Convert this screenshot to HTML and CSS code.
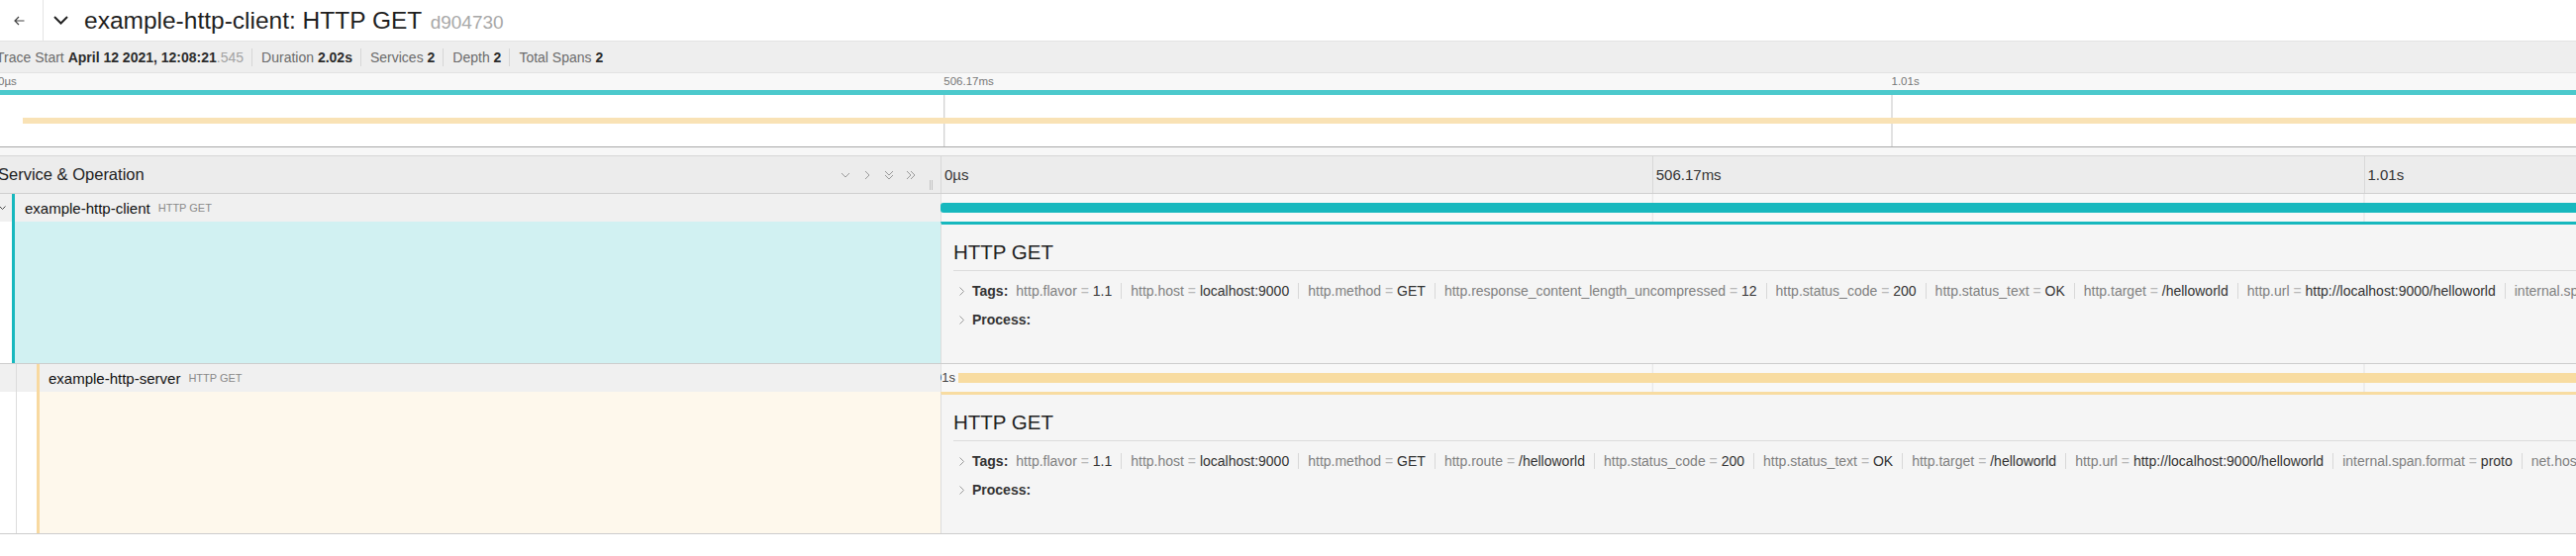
FILE: index.html
```html
<!DOCTYPE html>
<html lang="en">
<head>
    <meta charset="UTF-8">
    <meta name="viewport" content="width=device-width, initial-scale=1.0">
    <title>example-http-client: HTTP GET</title>
    <link rel="stylesheet" href="styles.css">
</head>
<body>
    <div class="page">
        <header class="title-bar">
            <a href="#" class="back-link">
                <svg width="11" height="10" viewBox="0 0 11 10"><path d="M10.5 5H1M5 1L1 5l4 4" fill="none" stroke="#444" stroke-width="1.2"/></svg>
            </a>
            <span class="title-toggle">
                <svg width="15" height="9" viewBox="0 0 15 9"><path d="M1 1l6.5 6.5L14 1" fill="none" stroke="#222" stroke-width="2"/></svg>
            </span>
            <h1 class="trace-title">example-http-client: HTTP GET <small class="trace-id">d904730</small></h1>
        </header>

        <ul class="trace-meta">
            <li>Trace Start <strong>April 12 2021, 12:08:21</strong><span class="ms">.545</span></li>
            <li>Duration <strong>2.02s</strong></li>
            <li>Services <strong>2</strong></li>
            <li>Depth <strong>2</strong></li>
            <li>Total Spans <strong>2</strong></li>
        </ul>

        <!-- Minimap -->
        <div class="minimap-ticks">
            <span>0µs</span>
            <span>506.17ms</span>
            <span>1.01s</span>
            <span></span>
        </div>
        <div class="minimap-canvas">
            <div class="mini-span mini-client"></div>
            <div class="mini-span mini-server"></div>
        </div>
        <div class="spacer"></div>

        <!-- Trace timeline -->
        <div class="view-header">
            <div class="view-header-left">
                <span>Service &amp; Operation</span>
                <div class="collapsers">
                    <svg width="12" height="12" viewBox="0 0 12 12"><path d="M2 4l4 4 4-4"/></svg>
                    <svg width="12" height="12" viewBox="0 0 12 12"><path d="M4 2l4 4-4 4"/></svg>
                    <svg width="12" height="12" viewBox="0 0 12 12"><path d="M2 2l4 4 4-4M2 6l4 4 4-4"/></svg>
                    <svg width="12" height="12" viewBox="0 0 12 12"><path d="M2 2l4 4-4 4M6 2l4 4-4 4"/></svg>
                </div>
                <span class="resizer"></span>
            </div>
            <div class="view-header-ticks">
                <span>0µs</span>
                <span>506.17ms</span>
                <span>1.01s</span>
                <span></span>
            </div>
        </div>

        <div class="span-row">
            <div class="span-name">
                <span class="span-toggle">
                    <svg width="7" height="5" viewBox="0 0 7 5"><path d="M0.5 0.5l3 3 3-3" fill="none" stroke="#444"/></svg>
                </span>
                <span class="color-bar client"></span>
                <span class="service">example-http-client</span>
                <span class="operation">HTTP GET</span>
            </div>
            <div class="span-timeline">
                <div class="span-bar client"></div>
            </div>
        </div>

        <div class="span-detail detail-client">
            <div class="detail-left">
                <span class="indent"></span>
                <span class="color-bar client"></span>
                <span class="detail-fill"></span>
            </div>
            <div class="detail-panel">
                <h2 class="detail-title">HTTP GET</h2>
                <div class="kv-row">
                    <svg class="kv-chevron" width="5" height="9" viewBox="0 0 5 9"><path d="M0.5 0.5l4 4-4 4" fill="none" stroke="#999"/></svg>
                    <strong>Tags:</strong>
                    <ul class="kv-list">
                        <li><span class="k">http.flavor</span> <span class="eq">=</span> <span class="v">1.1</span></li>
                        <li><span class="k">http.host</span> <span class="eq">=</span> <span class="v">localhost:9000</span></li>
                        <li><span class="k">http.method</span> <span class="eq">=</span> <span class="v">GET</span></li>
                        <li><span class="k">http.response_content_length_uncompressed</span> <span class="eq">=</span> <span class="v">12</span></li>
                        <li><span class="k">http.status_code</span> <span class="eq">=</span> <span class="v">200</span></li>
                        <li><span class="k">http.status_text</span> <span class="eq">=</span> <span class="v">OK</span></li>
                        <li><span class="k">http.target</span> <span class="eq">=</span> <span class="v">/helloworld</span></li>
                        <li><span class="k">http.url</span> <span class="eq">=</span> <span class="v">http://localhost:9000/helloworld</span></li>
                        <li><span class="k">internal.span.format</span> <span class="eq">=</span> <span class="v">proto</span></li>
                    </ul>
                </div>
                <div class="kv-row">
                    <svg class="kv-chevron" width="5" height="9" viewBox="0 0 5 9"><path d="M0.5 0.5l4 4-4 4" fill="none" stroke="#999"/></svg>
                    <strong>Process:</strong>
                </div>
            </div>
        </div>

        <div class="span-row">
            <div class="span-name">
                <span class="indent-guide"></span>
                <span class="color-bar server child"></span>
                <span class="service">example-http-server</span>
                <span class="operation">HTTP GET</span>
            </div>
            <div class="span-timeline">
                <div class="span-bar server offset">
                    <span class="span-label">2.01s</span>
                </div>
            </div>
        </div>

        <div class="span-detail detail-server">
            <div class="detail-left">
                <span class="indent-guide"></span>
                <span class="gap"></span>
                <span class="color-bar server"></span>
                <span class="detail-fill"></span>
            </div>
            <div class="detail-panel">
                <h2 class="detail-title">HTTP GET</h2>
                <div class="kv-row">
                    <svg class="kv-chevron" width="5" height="9" viewBox="0 0 5 9"><path d="M0.5 0.5l4 4-4 4" fill="none" stroke="#999"/></svg>
                    <strong>Tags:</strong>
                    <ul class="kv-list">
                        <li><span class="k">http.flavor</span> <span class="eq">=</span> <span class="v">1.1</span></li>
                        <li><span class="k">http.host</span> <span class="eq">=</span> <span class="v">localhost:9000</span></li>
                        <li><span class="k">http.method</span> <span class="eq">=</span> <span class="v">GET</span></li>
                        <li><span class="k">http.route</span> <span class="eq">=</span> <span class="v">/helloworld</span></li>
                        <li><span class="k">http.status_code</span> <span class="eq">=</span> <span class="v">200</span></li>
                        <li><span class="k">http.status_text</span> <span class="eq">=</span> <span class="v">OK</span></li>
                        <li><span class="k">http.target</span> <span class="eq">=</span> <span class="v">/helloworld</span></li>
                        <li><span class="k">http.url</span> <span class="eq">=</span> <span class="v">http://localhost:9000/helloworld</span></li>
                        <li><span class="k">internal.span.format</span> <span class="eq">=</span> <span class="v">proto</span></li>
                        <li><span class="k">net.host.name</span> <span class="eq">=</span> <span class="v">localhost</span></li>
                    </ul>
                </div>
                <div class="kv-row">
                    <svg class="kv-chevron" width="5" height="9" viewBox="0 0 5 9"><path d="M0.5 0.5l4 4-4 4" fill="none" stroke="#999"/></svg>
                    <strong>Process:</strong>
                </div>
            </div>
        </div>
    </div>
</body>
</html>
```

FILE: styles.css
```css
* {
    margin: 0;
    padding: 0;
    box-sizing: border-box;
    font-family: 'Liberation Sans', Arial, Helvetica, sans-serif;
}

body {
    background: #fff;
    width: 2602px;
    height: 562px;
    overflow: hidden;
}

/* page is wider than the window, scrolled a few px */
.page {
    width: 3829px;
    margin-left: -4px;
}

/* Title bar */
.title-bar {
    display: flex;
    align-items: center;
    height: 42px;
    border-bottom: 1px solid #e4e4e4;
    background: #fff;
}

.back-link {
    display: flex;
    align-items: center;
    justify-content: center;
    width: 48px;
    height: 100%;
    border-right: 1px solid #e4e4e4;
}

.title-toggle {
    display: flex;
    margin-left: 10px;
}

.trace-title {
    margin-left: 16px;
    font-size: 24.5px;
    font-weight: normal;
    color: #1f1f1f;
    white-space: nowrap;
}

.trace-id {
    margin-left: 2px;
    font-size: 19px;
    color: #a8a8a8;
}

/* Trace summary */
.trace-meta {
    display: flex;
    align-items: center;
    height: 31px;
    background: #eee;
    list-style: none;
    font-size: 14px;
    color: #6b6b6b;
}

.trace-meta li {
    padding: 0 8px 0 9px;
    border-left: 1px solid #d6d6d6;
    line-height: 18px;
    white-space: nowrap;
}

.trace-meta li:first-child {
    padding-left: 0;
    border-left: none;
}

.trace-meta strong {
    color: #2b2b2b;
}

.trace-meta .ms {
    color: #a3a3a3;
}

/* Minimap */
.minimap-ticks {
    display: grid;
    grid-template-columns: repeat(4, 1fr);
    height: 18px;
    background: #f8f8f8;
    border-top: 1px solid #e2e2e2;
    font-size: 11.5px;
    line-height: 17px;
    color: #777;
}

.minimap-ticks span:first-child {
    padding-left: 2px;
}

.minimap-canvas {
    height: 58px;
    border-bottom: 1px solid #a9a9a9;
    background: linear-gradient(90deg, #c4c4c4 1px, transparent 1px) 0 0 / 25% 100%, #fff;
}

.mini-span {
    height: 5px;
}

.mini-client {
    background: #4cc9cc;
}

.mini-server {
    height: 6px;
    margin: 23px 0 0 27px;
    background: #f9e2b5;
}

.spacer {
    height: 8px;
    background: #f7f7f7;
}

/* Timeline header */
.view-header {
    display: grid;
    grid-template-columns: 954px 1fr;
    height: 39px;
    background: #ececec;
    border-top: 1px solid #d6d6d6;
    border-bottom: 1px solid #cfcfcf;
}

.view-header-left {
    display: flex;
    align-items: center;
    padding: 0 8px 0 2px;
    font-size: 16.5px;
    color: #222;
}

.collapsers {
    display: flex;
    gap: 10px;
    margin-left: auto;
}

.collapsers path {
    fill: none;
    stroke: #999;
    stroke-width: 1;
}

.resizer {
    align-self: flex-end;
    width: 3px;
    height: 10px;
    margin: 0 0 3px 13px;
    border-left: 1px solid #c2c2c2;
    border-right: 1px solid #c2c2c2;
}

.view-header-ticks {
    display: grid;
    grid-template-columns: repeat(4, 1fr);
}

.view-header-ticks span {
    display: flex;
    align-items: center;
    padding-left: 3px;
    border-left: 1px solid #d8d8d8;
    font-size: 15px;
    color: #333;
}

/* Span rows */
.span-row {
    display: grid;
    grid-template-columns: 954px 1fr;
    height: 28px;
}

.span-name {
    display: flex;
    align-items: center;
    background: #f0f0f0;
    white-space: nowrap;
}

.span-toggle {
    display: flex;
    margin-left: 3px;
}

.color-bar {
    align-self: stretch;
    width: 3px;
    flex-shrink: 0;
}

.span-toggle + .color-bar {
    margin-left: 6px;
}

.color-bar.client {
    background: #17b8be;
}

.color-bar.server {
    background: #f8d9a0;
}

.color-bar.child {
    margin-left: 20px;
}

.indent-guide {
    align-self: stretch;
    width: 21px;
    flex-shrink: 0;
    border-right: 1px solid #dcdcdc;
}

.service {
    margin-left: 10px;
    font-size: 15px;
    color: #111;
}

.child + .service {
    margin-left: 9px;
}

.operation {
    margin-left: 8px;
    font-size: 11px;
    color: #8a8a8a;
}

.span-timeline {
    overflow: hidden;
    padding-top: 9px;
    background: linear-gradient(90deg, #e2e2e2 1px, transparent 1px) 0 0 / 25% 100%, #f8f8f8;
}

.span-bar {
    position: relative;
    height: 10px;
}

.span-bar.client {
    background: #17b8be;
    border-radius: 3px 0 0 3px;
}

.span-bar.server {
    background: #f8dca1;
}

.span-bar.offset {
    margin-left: 18px;
}

.span-label {
    position: absolute;
    right: 100%;
    top: -2px;
    padding-right: 3px;
    font-size: 13px;
    line-height: 14px;
    color: #444;
}

/* Span details */
.span-detail {
    display: grid;
    grid-template-columns: 954px 1fr;
    height: 144px;
    border-bottom: 1px solid #cdcdcd;
}

.detail-left {
    display: flex;
    background: #fff;
}

.indent {
    width: 16px;
}

.gap {
    width: 20px;
}

.detail-fill {
    flex: 1;
}

.detail-client .detail-fill {
    background: #d1f1f2;
}

.detail-server .detail-fill {
    background: #fef8ec;
}

.detail-panel {
    overflow: hidden;
    padding: 15px 0 0 12px;
    background: #f5f5f5;
    border-left: 1px solid #dcdcdc;
    border-top: 3px solid #17b8be;
}

.detail-server .detail-panel {
    border-top-color: #f8dca1;
}

.detail-title {
    padding-bottom: 5px;
    margin-bottom: 11px;
    border-bottom: 1px solid #dcdcdc;
    font-size: 20.5px;
    font-weight: normal;
    line-height: 26px;
    color: #222;
}

.kv-row {
    display: flex;
    align-items: center;
    height: 18px;
    margin-bottom: 11px;
    padding-left: 6px;
    font-size: 14px;
    white-space: nowrap;
}

.kv-row strong {
    margin-left: 8px;
    color: #333;
}

.kv-list {
    display: flex;
    margin-left: 8px;
    list-style: none;
}

.kv-list li {
    padding: 0 9px;
    border-left: 1px solid #d8d8d8;
    line-height: 16px;
}

.kv-list li:first-child {
    padding-left: 0;
    border-left: none;
}

.kv-list .k {
    color: #808080;
}

.kv-list .eq {
    color: #b8b8b8;
}

.kv-list .v {
    color: #333;
}
```
